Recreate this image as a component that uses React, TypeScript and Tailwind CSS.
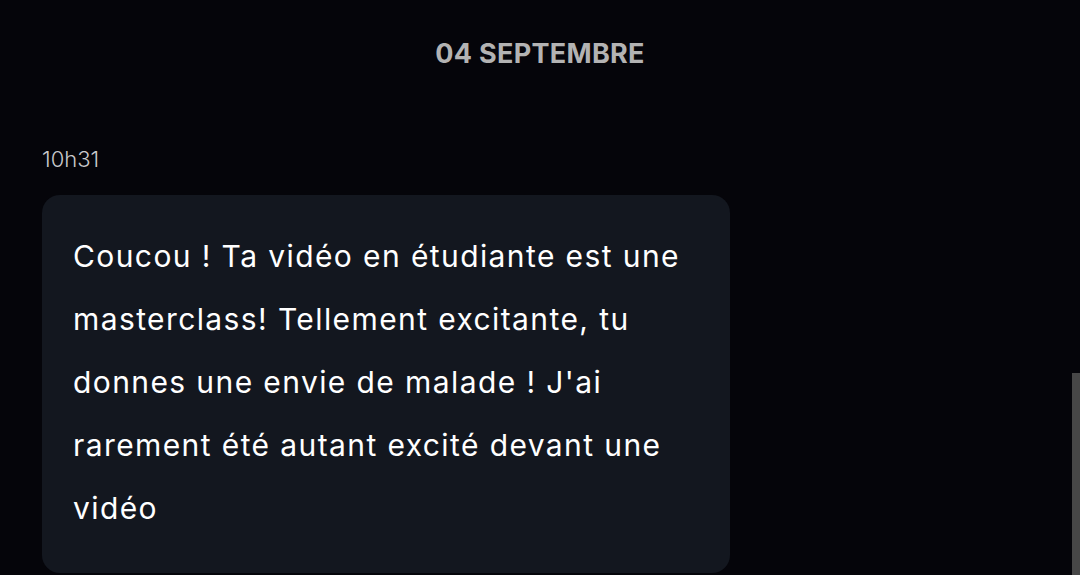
export default function App() {
  return (
    <div className="relative h-[575px] w-[1080px] overflow-hidden bg-[#05050a] font-['Inter',sans-serif]">
      <div className="flex flex-col px-[42px] pt-[38px]">
        <h2 className="text-center text-[27px] font-bold leading-[32px] tracking-[0.3px] text-[#b3b3b3]">
          04 SEPTEMBRE
        </h2>

        <span className="mt-[77px] text-[22px] font-light leading-[24px] text-[#c9c9cc]">10h31</span>

        <div className="mt-[24px] w-[688px] rounded-[18px] bg-[#13171f] px-[31px] pt-[30px] pb-[33px]">
          <p className="text-[30px] font-normal leading-[63px] tracking-[1.4px] text-white">
            Coucou ! Ta vidéo en étudiante est une masterclass! Tellement excitante, tu donnes une envie de malade ! J'ai rarement été autant excité devant une vidéo
          </p>
        </div>
      </div>

      <div className="absolute right-0 top-[373px] h-[202px] w-[8px] bg-[#474747]" />
    </div>
  );
}
